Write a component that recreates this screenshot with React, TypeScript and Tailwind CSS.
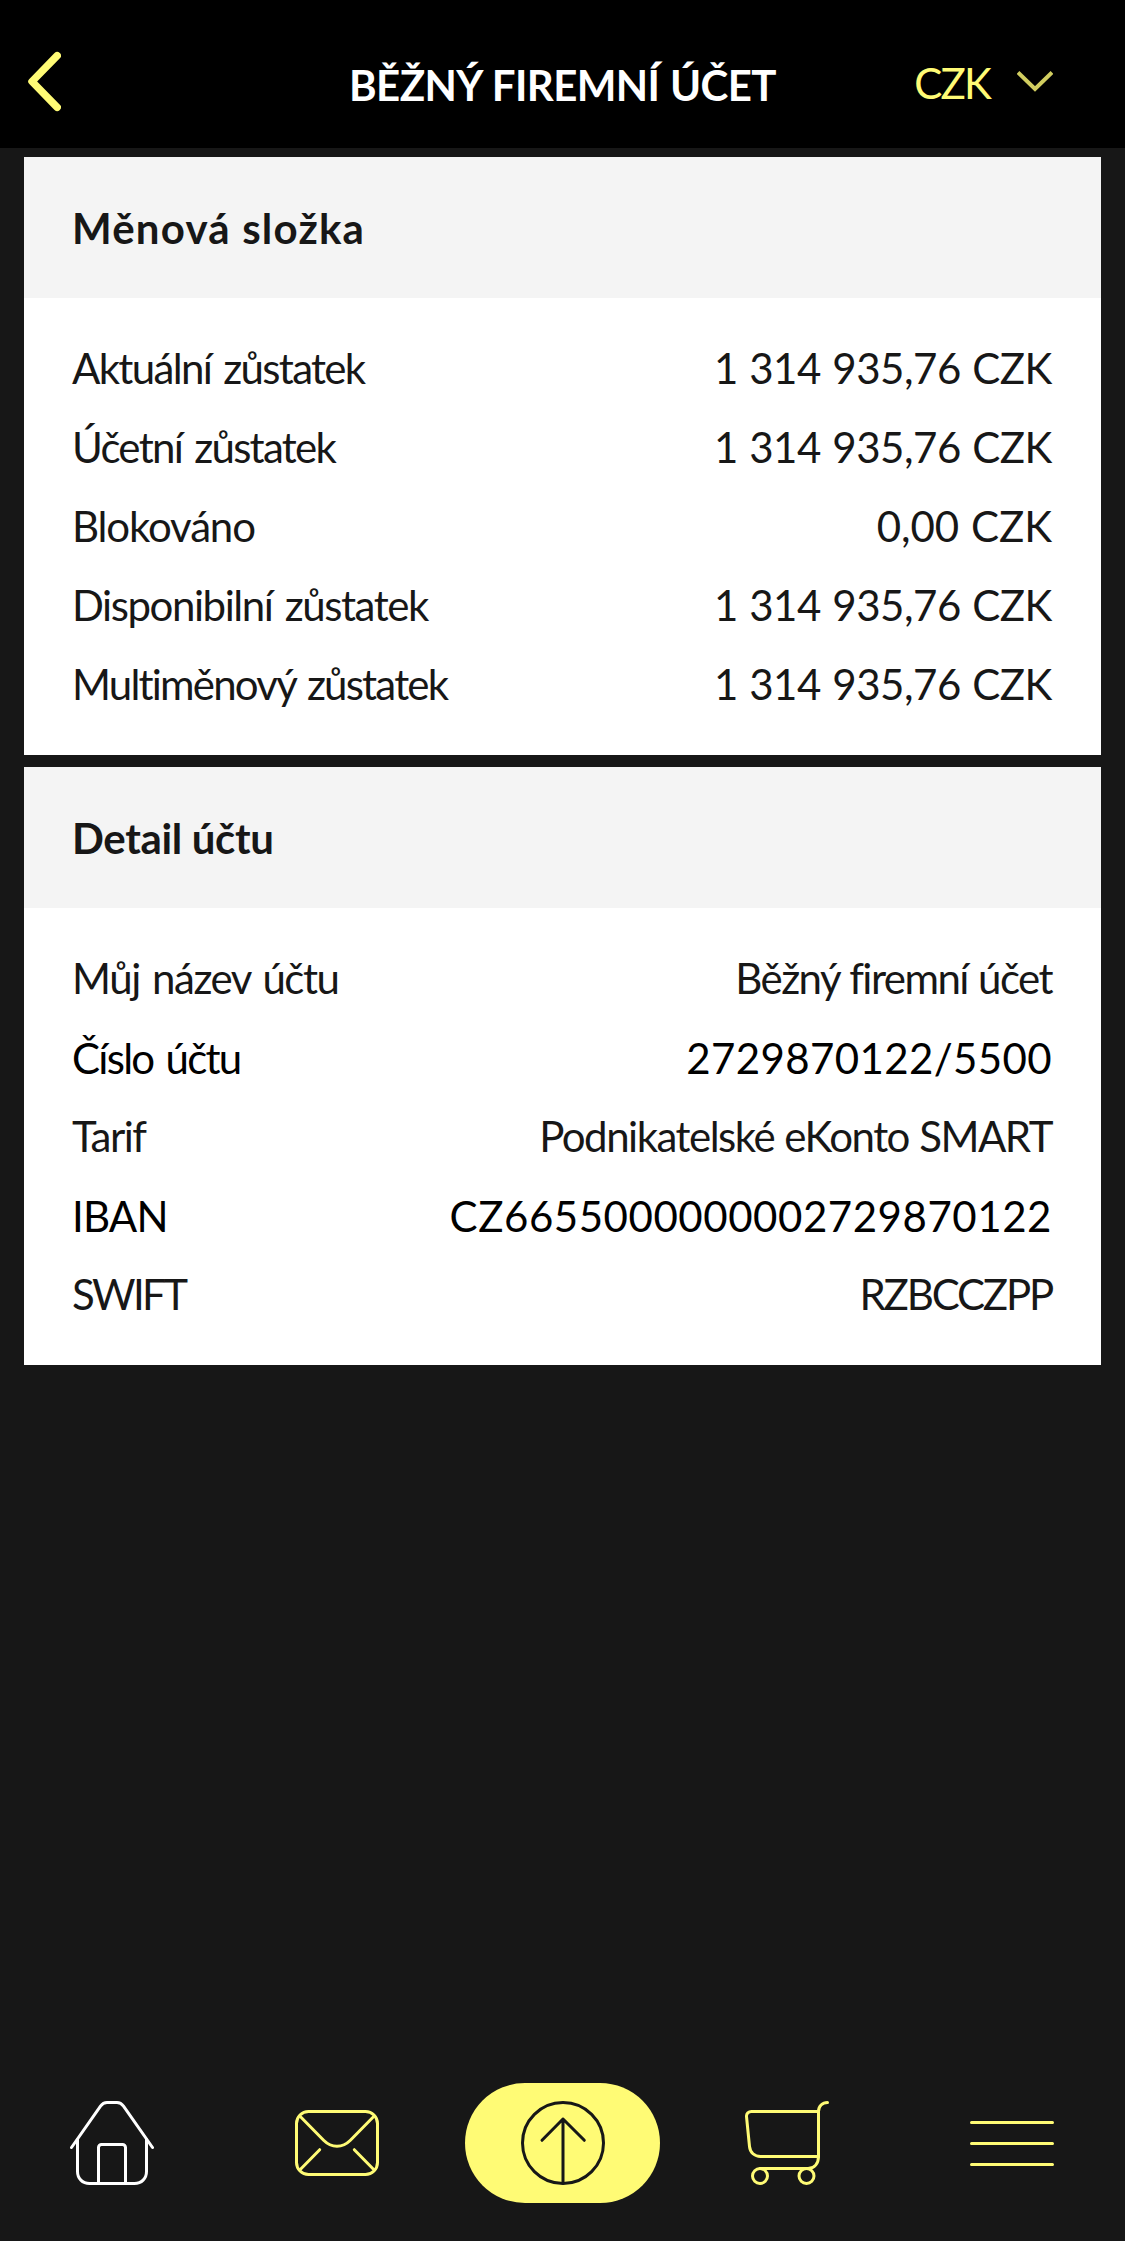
import type { ReactNode } from "react";
import clsx from "clsx";

interface DetailRow {
  label: string;
  value: string;
  labelClass?: string;
  valueClass?: string;
  copyable?: boolean;
}

interface DetailCardProps {
  title: string;
  titleClass?: string;
  rows: DetailRow[];
}

const balances: DetailRow[] = [
  {
    label: "Aktuální zůstatek",
    value: "1 314 935,76 CZK",
    labelClass: "tracking-[-1.67px]",
    valueClass: "tracking-[-0.45px]",
  },
  {
    label: "Účetní zůstatek",
    value: "1 314 935,76 CZK",
    labelClass: "tracking-[-1.71px]",
    valueClass: "tracking-[-0.45px]",
  },
  {
    label: "Blokováno",
    value: "0,00 CZK",
    labelClass: "tracking-[-1.15px]",
    valueClass: "tracking-[-0.03px]",
  },
  {
    label: "Disponibilní zůstatek",
    value: "1 314 935,76 CZK",
    labelClass: "tracking-[-1.44px]",
    valueClass: "tracking-[-0.45px]",
  },
  {
    label: "Multiměnový zůstatek",
    value: "1 314 935,76 CZK",
    labelClass: "tracking-[-1.8px]",
    valueClass: "tracking-[-0.45px]",
  },
];

const accountDetails: DetailRow[] = [
  {
    label: "Můj název účtu",
    value: "Běžný firemní účet",
    labelClass: "tracking-[-1.45px]",
    valueClass: "tracking-[-1.55px]",
  },
  {
    label: "Číslo účtu",
    value: "2729870122/5500",
    labelClass: "tracking-[-1.72px]",
    valueClass: "tracking-[0.38px]",
    copyable: true,
  },
  {
    label: "Tarif",
    value: "Podnikatelské eKonto SMART",
    labelClass: "tracking-[-1.5px]",
    valueClass: "tracking-[-1.5px]",
  },
  {
    label: "IBAN",
    value: "CZ6655000000002729870122",
    labelClass: "tracking-[-0.81px]",
    valueClass: "tracking-[0.55px]",
    copyable: true,
  },
  {
    label: "SWIFT",
    value: "RZBCCZPP",
    labelClass: "tracking-[-2.6px]",
    valueClass: "tracking-[-2.18px]",
  },
];

const DetailCard = ({ title, titleClass, rows }: DetailCardProps) => {
  return (
    <section className="bg-white">
      <h2
        className={clsx(
          "h-[141px] bg-[#f4f4f4] pl-12 font-bold leading-[143px]",
          titleClass
        )}
      >
        {title}
      </h2>
      <dl className="pt-[30px] pr-[49px] pb-8 pl-12">
        {rows.map((row) => (
          <div
            key={row.label}
            className={clsx(
              "flex h-[79px] justify-between whitespace-nowrap",
              row.copyable ? "leading-[82px] text-black" : "leading-[80px]"
            )}
          >
            <dt className={clsx("[word-spacing:3px]", row.labelClass)}>
              {row.label}
            </dt>
            <dd className={clsx("[word-spacing:1px]", row.valueClass)}>
              {row.value}
            </dd>
          </div>
        ))}
      </dl>
    </section>
  );
};

const NavIcon = ({ children }: { children: ReactNode }) => (
  <svg
    className="size-[84px]"
    viewBox="0 0 84 84"
    fill="none"
    stroke="currentColor"
    strokeWidth="3"
    strokeLinecap="round"
    strokeLinejoin="round"
  >
    {children}
  </svg>
);

const HomeIcon = () => (
  <NavIcon>
    <path d="M1.5 46.5 30.5 5.2C32.2 2.8 34.2 1.5 37 1.5h10c2.8 0 4.8 1.3 6.5 3.7l29 41.3" />
    <path d="M7.5 38.5v32c0 7 5 12 12 12h45c7 0 12-5 12-12v-32" />
    <path d="M28.5 82.5v-36a3 3 0 0 1 3-3h21a3 3 0 0 1 3 3v36" />
  </NavIcon>
);

const MailIcon = () => (
  <NavIcon>
    <rect x="1.5" y="10.5" width="81" height="63" rx="12" />
    <path d="M4.8 15 28.6 39.3c8 8 18.8 8 26.8 0L79.2 15" />
    <path d="M4.8 69 24.7 48.7M79.2 69 59.3 48.7" />
  </NavIcon>
);

const SendIcon = () => (
  <NavIcon>
    <circle cx="42" cy="42" r="40.5" />
    <path d="M42 82V18M21 39.3 42 18l21.3 21.3" />
  </NavIcon>
);

const CartIcon = () => (
  <NavIcon>
    <path d="M82.5 1.5c-5.2 0-9 3.8-9 9v45c0 7-4 12-10.5 12H15" />
    <path d="M73.5 10.5h-67c-3 0-5.2 2-5 5l3 30c.6 6 5 10 11 10h58" />
    <circle cx="15" cy="75" r="7.5" />
    <circle cx="61.5" cy="75" r="7.5" />
  </NavIcon>
);

const MenuIcon = () => (
  <NavIcon>
    <path d="M1.5 21.5h81M1.5 42.5h81M1.5 63.5h81" />
  </NavIcon>
);

const App = () => {
  return (
    <div className="flex h-[2241px] w-full flex-col bg-[#171717] font-['Lato',sans-serif] text-[42px] text-[#171717]">
      <header className="grid h-[148px] grid-cols-[1fr_auto_1fr] items-center bg-black pt-[15px] pr-[72px] pl-7 text-[#fffb75]">
        <button aria-label="Zpět" className="w-fit">
          <svg className="h-[61px] w-[33px]" viewBox="0 0 33 61" fill="none">
            <path
              d="M29.2 4.7 4 30.5l25.2 25.8"
              stroke="currentColor"
              strokeWidth="7.5"
              strokeLinecap="round"
              strokeLinejoin="round"
            />
          </svg>
        </button>
        <h1 className="mt-[7px] ml-11 font-bold tracking-[-0.6px] text-white [word-spacing:1px]">
          BĚŽNÝ FIREMNÍ ÚČET
        </h1>
        <button className="flex items-center justify-end gap-[27px]">
          <span className="mt-[3px] tracking-[-1.82px]">CZK</span>
          <svg className="h-6 w-9" viewBox="0 0 36 24" fill="none">
            <path d="M1 2.5 18 19 35 2.5" stroke="#d1cd60" strokeWidth="4" />
          </svg>
        </button>
      </header>

      <main className="flex flex-1 flex-col gap-3 px-6 pt-[9px]">
        <DetailCard
          title="Měnová složka"
          titleClass="tracking-[1.2px]"
          rows={balances}
        />
        <DetailCard
          title="Detail účtu"
          titleClass="tracking-[-0.35px]"
          rows={accountDetails}
        />
      </main>

      <nav className="grid h-[196px] grid-cols-5 place-items-center text-[#fffb75]">
        <a className="mr-px text-white">
          <HomeIcon />
        </a>
        <a className="mr-px">
          <MailIcon />
        </a>
        <a className="flex h-[120px] w-[195px] items-center justify-center rounded-full bg-[#fffb75] text-[#171717]">
          <SendIcon />
        </a>
        <a className="mr-px">
          <CartIcon />
        </a>
        <a className="mr-px">
          <MenuIcon />
        </a>
      </nav>
    </div>
  );
};

export default App;
